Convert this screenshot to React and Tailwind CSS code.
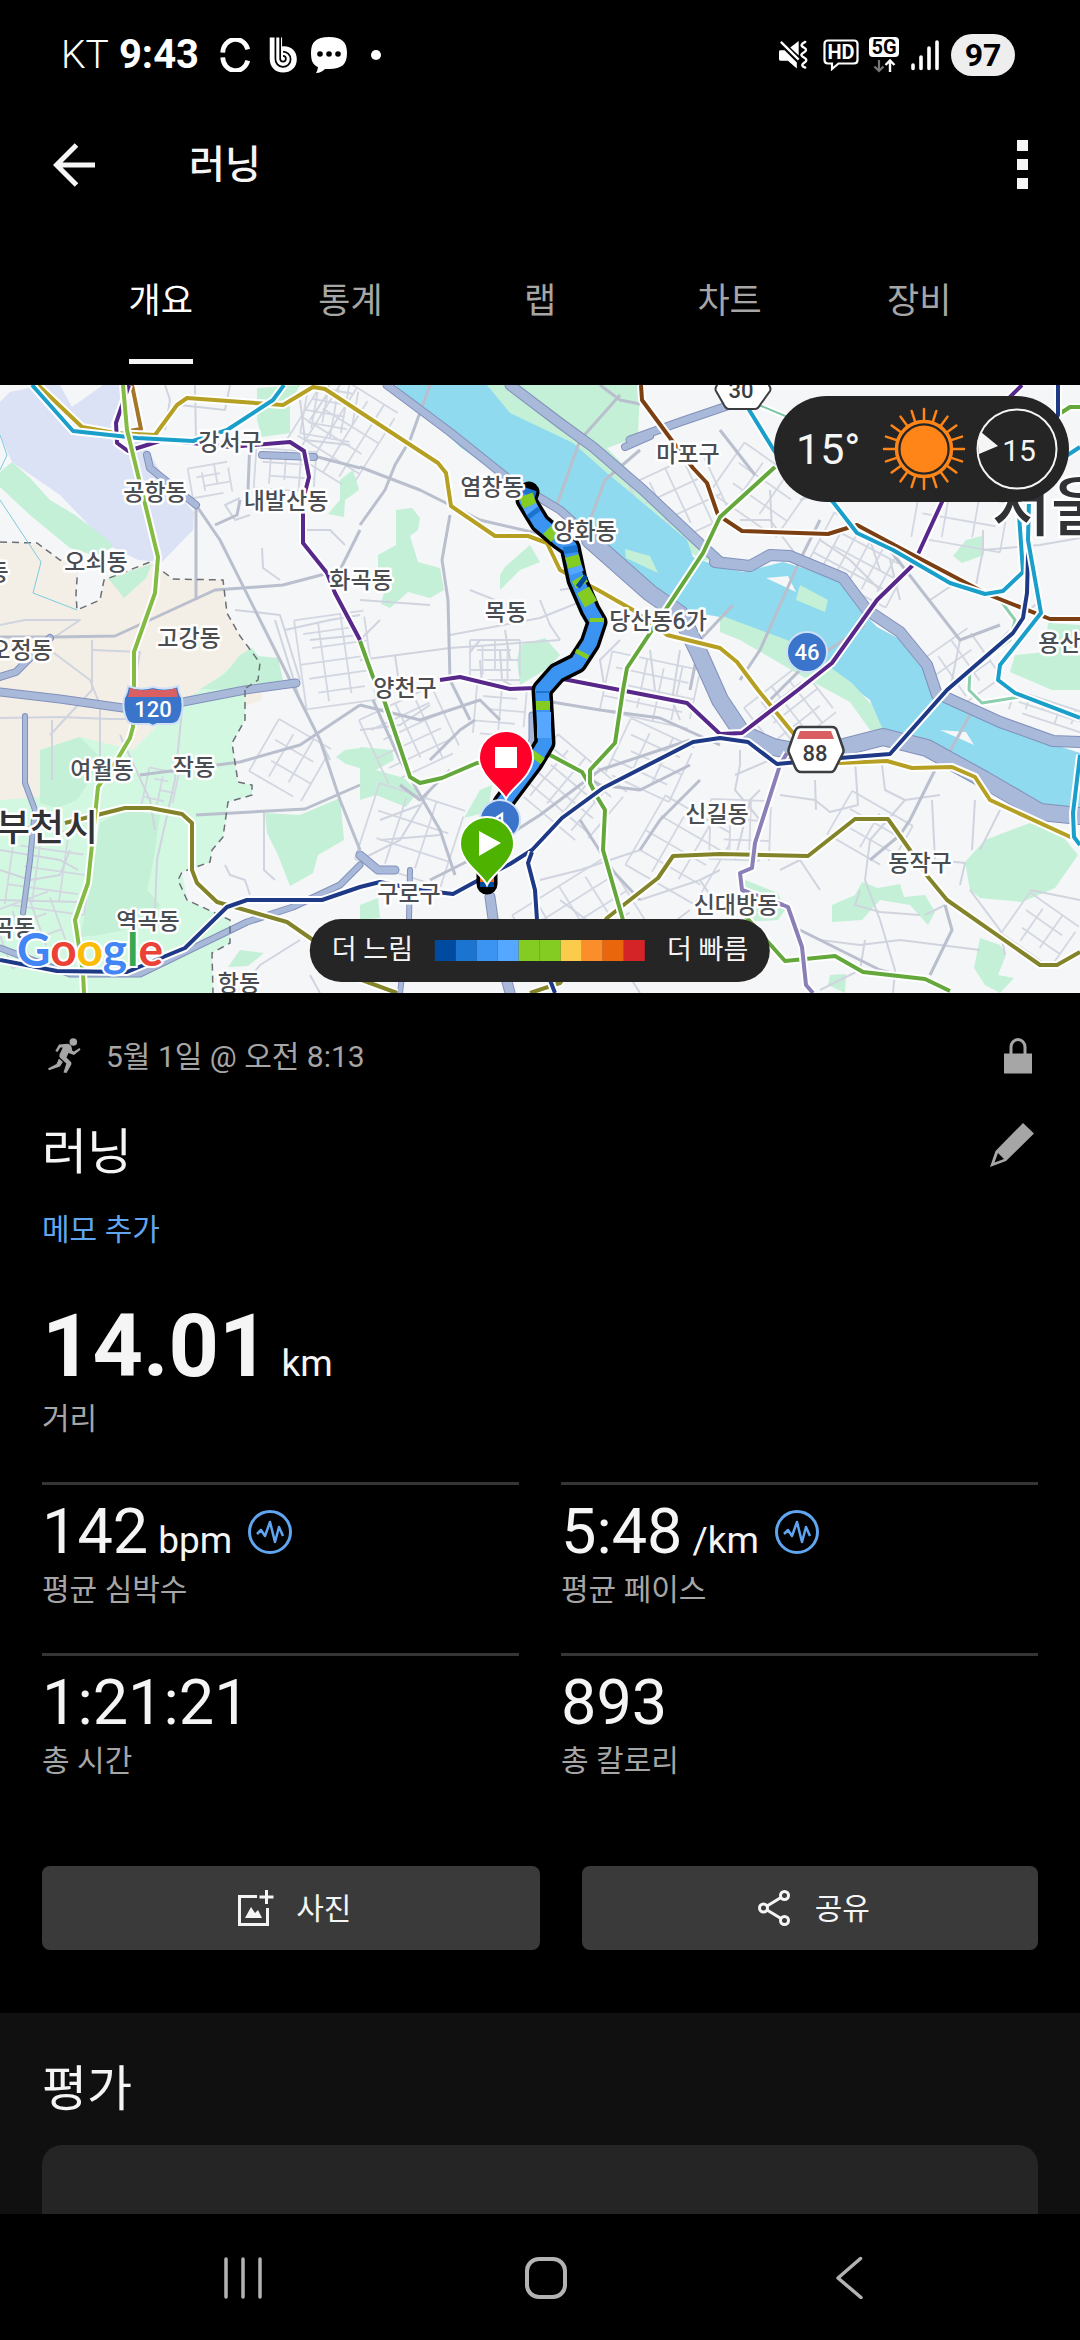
import React, { useState } from "react";

const TABS = ["개요", "통계", "랩", "차트", "장비"];

const PACE_COLORS = [
  "#004a9f",
  "#1b74cf",
  "#3c94f2",
  "#55a7ff",
  "#84cc22",
  "#84cc22",
  "#fbcc4c",
  "#f98e2b",
  "#ea660d",
  "#d42427",
];

const STATS = [
  { value: "142", unit: "bpm", label: "평균 심박수", badge: true },
  { value: "5:48", unit: "/km", label: "평균 페이스", badge: true },
  { value: "1:21:21", label: "총 시간" },
  { value: "893", label: "총 칼로리" },
];

// Map data, all in the coordinates of the map's viewBox
const AREAS = [
  { fill: "#dbe2f5", points: "0,402 10,392 45,385 60,385 72,407 103,385 128,385 118,405 110,425 118,445 142,440 165,480 194,512 193,530 162,562 138,560 108,545 60,495 12,462 0,435" },
  { fill: "#f4f6f8", points: "0,436 8,455 6,470 0,474" },
  { fill: "#c3f0d6", points: "12,462 30,478 50,500 75,515 108,540 113,547 96,556 70,548 30,515 0,487 0,472" },
  { fill: "#f4efe6", points: "0,542 37,543 60,560 78,566 76,593 77,610 100,600 104,580 150,562 173,579 223,580 227,613 240,636 260,663 262,700 180,730 110,760 40,805 0,810" },
  { fill: "#c3f0d6", points: "108,578 152,564 146,578 124,598" },
  { fill: "#d3f8e2", points: "245,690 245,720 232,743 238,782 252,785 252,795 228,802 223,837 212,850 210,862 182,872 187,900 230,920 230,943 212,953 213,993 0,993 0,800 40,797 40,750 80,737 133,750 180,703 215,680 245,655 250,645" },
  { fill: "#c3f0d6", points: "40,750 80,737 100,757 90,780 77,800 57,808 40,803" },
  { fill: "#c3f0d6", points: "100,823 125,810 160,815 153,863 147,890 160,905 148,925 100,935 80,937 90,890" },
  { fill: "#c3f0d6", points: "240,655 252,648 258,656 278,658 283,680 250,690 200,689 225,674" },
  { fill: "#c3f0d6", points: "257,388 300,385 290,403 290,433 262,437 257,420" },
  { fill: "#c3f0d6", points: "340,480 353,470 359,490 345,500 344,517 328,514 340,500" },
  { fill: "#c3f0d6", points: "396,510 412,508 420,518 418,530 410,536 418,562 440,568 444,590 430,598 408,592 390,608 381,604 384,592 378,580 378,555 396,545" },
  { fill: "#c3f0d6", points: "505,567 530,545 540,562 520,570 500,590 500,575" },
  { fill: "#c3f0d6", points: "520,645 545,638 560,655 548,668 520,685 517,660" },
  { fill: "#c3f0d6", points: "360,747 392,750 394,760 376,770 404,778 418,792 406,807 376,795 360,800" },
  { fill: "#c3f0d6", points: "464,818 480,790 492,785 488,812" },
  { fill: "#c3f0d6", points: "360,905 378,898 380,918 360,920" },
  { fill: "#c3f0d6", points: "265,813 300,815 340,798 344,840 318,855 313,873 290,886 278,855 267,833" },
  { fill: "#c3f0d6", points: "228,967 240,950 264,953 248,966" },
  { fill: "#c3f0d6", points: "336,757 345,750 360,748 360,768 346,764" },
  { fill: "#c3f0d6", points: "487,385 640,385 638,437 607,448 645,487 687,530 730,562 700,560 643,510 573,450 510,420" },
  { fill: "#c3f0d6", points: "966,540 982,536 984,555 962,563 953,556" },
  { fill: "#c3f0d6", points: "1048,623 1080,625 1080,690 1052,690 1010,672 1015,655 1045,652" },
  { fill: "#c3f0d6", points: "965,862 985,840 1030,823 1060,833 1078,855 1055,888 1022,902 980,898 970,890" },
  { fill: "#c3f0d6", points: "832,905 855,895 862,882 878,888 900,884 904,897 925,895 935,912 928,925 910,905 880,900 862,920 832,922" },
  { fill: "#c3f0d6", points: "745,880 778,893 785,910 778,920 742,922" },
  { fill: "#c3f0d6", points: "980,938 1000,945 1006,955 998,975 1014,978 1000,993 985,985 974,968" },
  { fill: "#c3f0d6", points: "830,975 846,974 845,993 828,985" },
];

const RIVER =
  "487,385 510,413 573,443 607,473 643,503 687,540 693,557 720,567 743,572 783,562 803,568 843,583 860,610 877,627 907,643 923,663 933,690 983,713 1040,740 1080,753 1080,813 1047,813 1007,790 970,767 927,747 907,733 883,732 870,700 850,685 813,660 787,643 720,617 680,610 643,580 607,550 573,520 520,490 460,447 420,407 395,385";

const RIVER_BANKS = [
  { fill: "#c3f0d6", points: "720,615 787,640 820,660 852,683 872,705 884,732 870,730 850,702 800,675 740,640 720,632" },
  { fill: "#c3f0d6", points: "800,585 828,600 825,612 796,600" },
  { fill: "#c3f0d6", points: "625,549 650,556 658,573 626,558" },
  { fill: "#c3f0d6", points: "573,520 607,547 660,592 650,590 600,552" },
  { fill: "#f4f6f8", points: "766,578 788,576 796,592" },
  { fill: "#f4f6f8", points: "940,730 966,732 974,745" },
];

const EXPRESSWAYS = [
  { w: 11, points: "510,385 560,423 593,447 643,490 693,537 720,562" },
  { w: 12, points: "715,562 750,566 770,555 790,556 843,578 867,610 900,632 927,665 937,695" },
  { w: 12, points: "945,697 1000,722 1053,741 1080,742" },
  { w: 9, points: "387,385 450,432 510,480 560,510 600,546" },
  { w: 18, points: "590,540 650,593 680,614 700,655 720,700 742,733 773,747 800,752 840,748 883,737 927,748 985,780 1040,812 1080,816" },
  { w: 9, points: "630,440 680,422 730,405" },
  { w: 8, points: "625,447 650,436" },
  { w: 8, points: "0,677 16,672 50,638" },
  { w: 9, points: "0,692 60,699 123,708 183,702 245,690 296,683" },
  { w: 6, points: "25,716 25,783 35,810 30,860 23,913" },
  { w: 7, points: "0,948 70,974 140,974 247,922 293,907 340,885 360,865" },
  { w: 8, points: "262,455 314,457" },
  { w: 8, points: "147,455 150,468 196,505" },
  { w: 7, points: "532,715 532,740 524,762" },
  { w: 11, points: "490,897 496,940 510,993" },
  { w: 6, points: "410,870 409,920 400,993" },
  { w: 9, points: "360,855 378,870 395,870" },
];

const MAIN_ROADS = [
  "0,637 55,637 115,636 150,620 215,590 283,585 340,570 360,530",
  "196,505 196,600",
  "196,505 220,540 260,620 305,710 320,740 340,800 360,850",
  "250,440 248,490",
  "310,455 360,468",
  "360,467 420,490 480,520 545,535",
  "360,525 385,490 395,465 410,440 430,385",
  "450,515 442,560 448,600 450,680 470,720",
  "196,815 305,809 360,785",
  "140,775 240,762 300,745 360,705",
  "215,525 237,515 240,500",
  "600,385 620,400 640,404",
  "620,395 580,440 555,510",
  "640,450 605,480 590,520",
  "820,520 800,560 760,650 740,680",
  "733,605 700,640 690,690",
  "970,715 945,760 935,770 910,820 900,835 870,860",
  "865,625 800,670 770,700",
  "800,930 880,970 940,985",
  "945,905 952,930 930,975",
  "890,550 960,640 1000,625",
  "720,430 755,475",
  "360,705 420,720 480,700 500,720",
  "540,700 600,710 660,718 720,745",
  "430,760 460,730 475,720",
  "373,700 400,760 440,830 455,875",
  "430,880 470,860 540,815 600,770 690,740",
  "580,820 612,870 640,900",
  "560,760 600,785 640,790 690,765",
  "640,850 660,820 700,780",
  "400,785 420,800 450,770",
];

const MINOR_ROADS = [
  "165,385 170,400 165,430",
  "195,385 196,440",
  "230,385 225,410 180,405",
  "0,625 25,620 80,620 50,640",
  "92,640 92,690 50,735",
  "92,650 140,652 135,680",
  "50,650 90,680 100,705 100,760",
  "262,548 263,568 280,580",
  "300,400 305,440 350,445",
  "310,420 330,390",
  "240,498 225,505 235,520 250,515",
  "303,530 330,530 345,545",
  "285,630 330,620 360,615",
  "310,640 360,635",
  "275,620 300,700 330,760",
  "235,610 280,615 300,680",
  "0,718 60,717 110,719 180,719",
  "183,700 175,780 157,860 155,910",
  "52,720 52,780",
  "0,850 60,860 78,870",
  "0,870 30,880 60,875 70,850",
  "0,900 80,902",
  "120,735 150,800 155,830",
  "225,865 230,875 245,880 250,895",
  "264,810 264,870 275,880",
  "300,940 260,965 240,990",
  "310,975 320,993",
  "360,600 430,605",
  "380,620 360,640",
  "450,635 540,618 585,600",
  "360,660 450,648 560,640",
  "395,655 400,690",
  "470,652 480,640 520,640",
  "480,660 482,685",
  "500,650 502,680 520,690",
  "505,630 510,660",
  "470,590 495,600",
  "540,600 550,625 560,640",
  "620,640 600,660 605,690",
  "650,650 655,690",
  "680,650 672,700 680,720",
  "560,590 590,585",
  "740,520 770,520 800,560",
  "770,490 772,530",
  "800,500 830,490 860,495 910,500",
  "820,540 850,560 880,590",
  "870,540 880,570",
  "890,560 900,600",
  "930,600 960,580",
  "983,550 1040,545 1080,538",
  "983,530 983,550 975,590",
  "960,640 950,690",
  "1000,640 1040,600",
  "740,750 740,765 735,790 760,820",
  "735,775 770,760",
  "855,760 858,805 830,812 815,800 780,795",
  "882,765 885,790 905,800 940,795",
  "815,780 816,810",
  "760,790 750,800 735,860",
  "905,800 870,840 865,880 880,920",
  "932,800 935,860 965,863 960,885",
  "975,800 972,850",
  "880,920 895,970 893,993",
  "865,940 860,970 820,990",
  "860,890 855,905 880,912 920,915",
  "925,915 945,905",
  "970,890 1000,930 1005,955",
  "1000,810 980,850",
  "1030,890 1080,900",
  "820,940 860,945 900,940 980,950",
  "780,870 800,860 820,890",
  "560,900 600,930 640,993",
  "540,880 580,870 640,850",
  "640,900 700,880 720,870",
  "650,940 690,910",
  "700,880 720,910",
  "380,840 440,835",
  "380,820 420,805",
  "360,860 400,840 430,790",
  "360,730 400,725 430,705",
];

// Rotated street grids that fill the residential districts
const DISTRICTS = [
  { x: 340, y: 430, w: 80, h: 90, a: 32, cols: 5, rows: 5 },
  { x: 330, y: 408, w: 60, h: 50, a: -80, cols: 5, rows: 5 },
  { x: 285, y: 470, w: 60, h: 40, a: 4, cols: 4, rows: 3 },
  { x: 210, y: 480, w: 40, h: 30, a: -10, cols: 3, rows: 3 },
  { x: 335, y: 660, w: 70, h: 90, a: -8, cols: 3, rows: 6 },
  { x: 410, y: 735, w: 80, h: 70, a: -25, cols: 4, rows: 5 },
  { x: 500, y: 710, w: 50, h: 50, a: 5, cols: 2, rows: 4 },
  { x: 495, y: 660, w: 50, h: 40, a: 0, cols: 4, rows: 4 },
  { x: 570, y: 790, w: 90, h: 70, a: 40, cols: 5, rows: 5 },
  { x: 650, y: 690, w: 90, h: 60, a: 12, cols: 5, rows: 4 },
  { x: 650, y: 760, w: 70, h: 60, a: 25, cols: 3, rows: 4 },
  { x: 580, y: 920, w: 110, h: 80, a: -32, cols: 4, rows: 4 },
  { x: 680, y: 850, w: 80, h: 80, a: -60, cols: 4, rows: 3 },
  { x: 410, y: 835, w: 90, h: 80, a: 18, cols: 3, rows: 3 },
  { x: 680, y: 500, w: 80, h: 70, a: -25, cols: 4, rows: 3 },
  { x: 760, y: 490, w: 80, h: 60, a: 35, cols: 3, rows: 3 },
  { x: 860, y: 560, w: 90, h: 60, a: 28, cols: 6, rows: 4 },
  { x: 960, y: 520, w: 90, h: 50, a: 10, cols: 3, rows: 2 },
  { x: 790, y: 710, w: 70, h: 60, a: -38, cols: 4, rows: 4 },
  { x: 740, y: 830, w: 60, h: 60, a: 2, cols: 3, rows: 3 },
  { x: 870, y: 830, w: 70, h: 50, a: 30, cols: 2, rows: 3 },
  { x: 1040, y: 930, w: 60, h: 50, a: 35, cols: 3, rows: 3 },
  { x: 50, y: 870, w: 80, h: 80, a: 8, cols: 3, rows: 4 },
  { x: 30, y: 930, w: 60, h: 60, a: -20, cols: 3, rows: 3 },
  { x: 290, y: 760, w: 60, h: 60, a: 30, cols: 3, rows: 3 },
  { x: 160, y: 790, w: 30, h: 40, a: 12, cols: 2, rows: 4 },
  { x: 1050, y: 712, w: 80, h: 20, a: 18, cols: 5, rows: 2 },
  { x: 960, y: 670, w: 60, h: 60, a: -35, cols: 3, rows: 3 },
];

const SUBWAYS = [
  { c: "#8ccfae", w: 3, points: "1000,600 1015,620 1010,640 970,670 969,690 982,703 1020,697" },
  { c: "#7ac6a5", w: 2, points: "735,395 790,418" },
  { c: "#a5762a", w: 4, points: "132,385 141,429 117,433" },
  { c: "#b5a024", w: 4, points: "38,385 82,427 115,433 155,435 177,405 187,398 283,405 313,387 325,389 360,412 438,463 446,473 451,506 495,536 528,536 547,543 560,570 573,577 598,590 633,610 667,635 720,648 737,662 758,690 793,733 840,763 887,761 912,768 952,767 975,777 990,800 1077,840" },
  { c: "#83842a", w: 4, points: "65,823 125,808 150,808 182,814 192,823 192,870 197,883 217,902 287,922 313,940 340,972 397,993" },
  { c: "#83842a", w: 4, points: "530,993 560,983 607,918 658,878 673,856 720,854 808,856 855,819 888,819 910,850 928,877 947,900 1040,965 1057,965 1080,952" },
  { c: "#57288a", w: 4, points: "129,385 116,423 117,443 128,451 163,440 230,447 290,442 304,451 309,477 303,500 303,543 327,573 335,593 360,640" },
  { c: "#64a83c", w: 4, points: "360,641 373,677 385,703 410,777 420,783 442,778 477,763 550,755 582,772 605,810 603,850 623,920" },
  { c: "#57288a", w: 4, points: "440,680 460,677 510,689 535,688 563,679 620,690 687,703 720,734 742,733 798,690 832,663 877,600 913,565 942,502 970,440 1010,397 1022,385" },
  { c: "#1a9fcb", w: 4, points: "32,385 73,431 137,438 193,441 227,430 273,400 284,385" },
  { c: "#83bb43", w: 4, points: "123,385 127,430 158,557 155,593 134,652 134,690 133,727 130,738 117,760 98,787 88,883 75,920 83,973 84,993" },
  { c: "#7c3f12", w: 4, points: "641,385 642,400 673,442 693,468 707,483 718,515 742,531 828,534 857,525 913,555 987,594 1050,619 1080,619" },
  { c: "#64a83c", w: 4, points: "775,467 720,517 703,553 627,668 623,690 615,743 590,770 590,783 597,797" },
  { c: "#64a83c", w: 4, points: "1050,420 1070,407 1080,407" },
  { c: "#64a83c", w: 4, points: "740,910 768,942 785,961 835,956 863,972 925,979 950,991" },
  { c: "#8b7fb8", w: 4, points: "787,753 780,765 755,843 752,868 740,873 742,890 783,905 788,907 802,947 806,985 813,993" },
  { c: "#1a9fcb", w: 4, points: "730,385 748,408 775,452 833,502 857,533 893,550 950,583 985,594 1003,591 1023,572 1018,500" },
  { c: "#1e3a87", w: 4, points: "1058,385 1058,415 1030,480 1027,593 1023,618 1013,633 947,690 890,754 840,758 777,764 748,742 720,738 693,742 603,788 562,818 532,850 510,864 475,882 453,894 420,890 380,882 360,887 322,900 247,900 227,907 185,948 127,972 57,971 0,960" },
  { c: "#1e3a87", w: 4, points: "532,852 528,863 535,890 537,920 550,980 555,993" },
  { c: "#1a9fcb", w: 4, points: "1029,500 1028,540 1041,613 1000,665 998,680 1015,693 1080,718" },
  { c: "#1a9fcb", w: 4, points: "1060,460 1080,447" },
  { c: "#1a9fcb", w: 4, points: "1080,755 1073,813 1074,837 1080,845" },
];

const BORDERS = [
  "0,542 37,543 60,560 78,566 76,593 77,610 100,600 104,580 150,562 173,579 223,580 227,613 240,636 260,663 258,680 246,688",
  "245,690 245,720 232,743 238,782 252,785 252,795 228,802 223,837 212,850 210,862 182,872 178,880 187,900 230,920 230,943 212,953 213,993",
];

const ROUTE = "529,492 526,500 540,523 560,540 570,547 577,580 590,610 597,622 590,643 577,663 557,673 542,690 545,743 533,763 503,803 487,850 487,884";

const ROUTE_PARTS = [
  { c: "#1b74cf", points: "530,489 528,495" },
  { c: "#84cc22", points: "526,495 530,506" },
  { c: "#55a7ff", points: "530,506 533,512" },
  { c: "#1b74cf", points: "532,511 535,515" },
  { c: "#84cc22", points: "548,529 556,537" },
  { c: "#1b74cf", points: "570,546 571,553" },
  { c: "#84cc22", points: "572,556 575,567" },
  { c: "#55a7ff", points: "575,567 577,573" },
  { c: "#84cc22", points: "578,578 582,585" },
  { c: "#004a9f", points: "580,580 584,583" },
  { c: "#84cc22", points: "583,590 591,604" },
  { c: "#84cc22", points: "597,618 597,622" },
  { c: "#84cc22", points: "583,652 581,656" },
  { c: "#1b74cf", points: "543,691 543,693" },
  { c: "#84cc22", points: "543,701 543,710" },
  { c: "#55a7ff", points: "544,712 544,738" },
  { c: "#84cc22", points: "539,754 535,760" },
  { c: "#ea660d", points: "487,878 487,882" },
  { c: "#004a9f", points: "487,882 487,887" },
];

const PLACES = [
  { t: "강서구", x: 230, y: 442 },
  { t: "공항동", x: 155, y: 492 },
  { t: "내발산동", x: 286, y: 501 },
  { t: "오쇠동", x: 96, y: 562 },
  { t: "동", x: -2, y: 572 },
  { t: "오정동", x: 21, y: 650 },
  { t: "고강동", x: 189, y: 638 },
  { t: "화곡동", x: 361, y: 580 },
  { t: "염창동", x: 492, y: 487 },
  { t: "양화동", x: 585, y: 531 },
  { t: "목동", x: 506, y: 612 },
  { t: "양천구", x: 405, y: 688 },
  { t: "마포구", x: 688, y: 454 },
  { t: "당산동6가", x: 658, y: 621 },
  { t: "여월동", x: 102, y: 770 },
  { t: "작동", x: 194, y: 767 },
  { t: "곡동", x: 14, y: 928 },
  { t: "역곡동", x: 148, y: 921 },
  { t: "항동", x: 239, y: 983 },
  { t: "구로구", x: 409, y: 894 },
  { t: "신길동", x: 717, y: 814 },
  { t: "신대방동", x: 736, y: 905 },
  { t: "동작구", x: 920, y: 863 },
  { t: "용산구", x: 1070, y: 643 },
];

const GOOGLE = [
  ["G", "text-[#4285f4]"],
  ["o", "text-[#ea4335]"],
  ["o", "text-[#fbbc05]"],
  ["g", "text-[#4285f4]"],
  ["l", "text-[#34a853]"],
  ["e", "text-[#ea4335]"],
];

const StatusBar = () => (
  <div className="flex h-[110px] items-center justify-between pl-[61px] pr-[65px] text-white">
    <div className="flex items-center">
      <span className="text-[39px] font-light leading-none">KT</span>
      <span className="ml-2.5 text-[40px] font-bold leading-none">9:43</span>
      <svg className="ml-5 h-[34px] w-[33px]" viewBox="0 0 32 36" fill="none" stroke="#fff" strokeWidth="5">
        <path d="M2.500 15.500A13.500 14.500 0 0 1 29 12" />
        <path d="M2.500 20.500A13.500 14.500 0 0 0 29 24" />
      </svg>
      <svg className="ml-4 h-[38px] w-[31px]" viewBox="0 0 32 40" fill="none">
        <path d="M1.500 1.500h13v9.500c9-1 15.500 4.500 15.500 13.500S23.500 38.500 15.500 38.500 1.500 33 1.500 24z" fill="#fff" />
        <path d="M7.500 1v23a8 8 0 1 0 8-7.500" stroke="#000" strokeWidth="1.800" />
        <path d="M12.500 1v23a3 3 0 1 0 3-3" stroke="#000" strokeWidth="1.800" />
      </svg>
      <svg className="ml-3 h-[38px] w-9" viewBox="0 0 36 38">
        <path d="M18 1C5 1 0 6 0 17c0 8 2 12 7 14-.5 3-1 4-2 6 4 0 7-2 9-4h4c13 0 18-5 18-16S31 1 18 1z" fill="#fff" />
        <circle cx="9" cy="18" r="2.800" />
        <circle cx="18" cy="18" r="2.800" />
        <circle cx="27" cy="18" r="2.800" />
      </svg>
      <span className="ml-6 h-2.5 w-2.5 rounded-full bg-white" />
    </div>
    <div className="flex items-center">
      <svg className="h-[30px] w-[30px]" viewBox="0 0 32 32">
        <path d="M0 12.500q0-1.500 1.500-1.500h4.500L19 24v6.500L9.500 22H1.500Q0 22 0 20.500z" fill="#fff" />
        <path d="M12 8l9-7v15.500z" fill="#fff" />
        <path d="M2 2l19 19" stroke="#fff" strokeWidth="2.500" />
        <path d="M28 2c-5 2.500-5 4 -1.500 6s3 3.500-.5 5.500-2.500 3.500 1 5.500 2.500 3.500-.5 5.500-2 3.500 1.500 5" fill="none" stroke="#fff" strokeWidth="2.500" strokeLinecap="round" />
      </svg>
      <svg className="ml-3.5 h-8 w-9" viewBox="0 0 36 32">
        <path d="M5 1.500h26q3.500 0 3.500 3.500v16q0 3.500-3.500 3.500H15.500L9 30v-5.500H5Q1.500 24.500 1.500 21V5Q1.500 1.500 5 1.500z" fill="none" stroke="#fff" strokeWidth="2.200" />
        <text x="18" y="20" textAnchor="middle" fontSize="20" fontWeight="700" fill="#fff">HD</text>
      </svg>
      <svg className="ml-2.5 h-9 w-8" viewBox="0 0 32 36">
        <rect x="0" y="0" width="30" height="20" rx="4" fill="#fff" />
        <text x="15" y="17" textAnchor="middle" fontSize="20" fontWeight="700">5G</text>
        <path d="M10 23v11M5.500 29.500L10 34l4.500-4.500" fill="none" stroke="#777" strokeWidth="2.200" />
        <path d="M21 35V24M16.500 28L21 23.500l4.500 4.500" fill="none" stroke="#fff" strokeWidth="2.400" />
      </svg>
      <svg className="ml-2.5 h-8 w-7" viewBox="0 0 28 32" stroke="#fff" strokeWidth="3.600" strokeLinecap="round">
        <path d="M2 26v3.500M10 18v11.500M18 9v20.500M26 3v26.500" />
      </svg>
      <span className="ml-3 flex h-[42px] w-16 items-center justify-center rounded-full bg-[#eee] text-[32px] font-bold leading-none text-black">97</span>
    </div>
  </div>
);

const AppBar = () => (
  <div className="flex h-[109px] items-center pl-[53px] pr-[52px]">
    <button type="button" aria-label="뒤로">
      <svg className="h-11 w-11" viewBox="0 0 44 44" fill="none" stroke="#f5f5f5" strokeWidth="5">
        <path d="M42 22H4M23.500 2L3.500 22l20 20" />
      </svg>
    </button>
    <h1 className="ml-[92px] flex-1 text-[39px] font-medium leading-[48px] text-[#f5f5f5]">러닝</h1>
    <button type="button" aria-label="더보기" className="flex flex-col gap-2">
      <span className="h-[11px] w-[11px] bg-[#f5f5f5]" />
      <span className="h-[11px] w-[11px] bg-[#f5f5f5]" />
      <span className="h-[11px] w-[11px] bg-[#f5f5f5]" />
    </button>
  </div>
);

const Tabs = ({ active, onChange }) => (
  <nav className="grid h-[166px] grid-cols-5 px-[66px]">
    {TABS.map((tab) => (
      <button
        key={tab}
        type="button"
        onClick={() => onChange(tab)}
        className={`flex flex-col items-center justify-end pb-[21px] text-[35px] leading-[48px] ${
          tab === active ? "text-white" : "text-[#a6a6a6]"
        }`}
      >
        <span>{tab}</span>
        <span className={`mt-[33px] h-[5px] w-16 ${tab === active ? "bg-[#f5f5f5]" : "bg-transparent"}`} />
      </button>
    ))}
  </nav>
);

const District = ({ x, y, w, h, a, cols, rows }) => {
  let d = "";
  for (let i = 0; i <= cols; i++) {
    const px = -w / 2 + (w / cols) * i;
    d += `M${px} ${-h / 2 + (i % 2) * 6}V${h / 2 - (i % 3) * 5}`;
  }
  for (let j = 0; j <= rows; j++) {
    const py = -h / 2 + (h / rows) * j;
    d += `M${-w / 2 + (j % 3) * 7} ${py}H${w / 2 - (j % 2) * 9}`;
  }
  return <path d={d} transform={`translate(${x} ${y}) rotate(${a})`} />;
};

const Pin = ({ x, y, color, children }) => (
  <g transform={`translate(${x} ${y})`}>
    <path d="M0 41C-4 31-27 18-27 0a27 27 0 0 1 54 0C27 18 4 31 0 41z" fill={color} stroke="#fff" strokeWidth="2" />
    {children}
  </g>
);

const MapDrawing = () => (
  <svg className="block h-full w-full" viewBox="0 385 1080 608" preserveAspectRatio="xMidYMid slice" fill="none">
    <rect x="0" y="385" width="1080" height="608" fill="#f5f6f8" />
    {AREAS.map((a, i) => (
      <polygon key={i} {...a} />
    ))}
    <g stroke="#d3d7e1" strokeWidth="1.800">
      {DISTRICTS.map((d, i) => (
        <District key={i} {...d} />
      ))}
    </g>
    <polygon points={RIVER} fill="#8fdaee" />
    {RIVER_BANKS.map((a, i) => (
      <polygon key={i} {...a} />
    ))}
    <g stroke="#d0d4df" strokeWidth="2" strokeLinejoin="round">
      {MINOR_ROADS.map((p, i) => (
        <polyline key={i} points={p} />
      ))}
    </g>
    <g stroke="#b9bfcd" strokeWidth="3" strokeLinejoin="round">
      {MAIN_ROADS.map((p, i) => (
        <polyline key={i} points={p} />
      ))}
    </g>
    <g strokeLinejoin="round" strokeLinecap="round">
      {EXPRESSWAYS.map((r, i) => (
        <polyline key={i} points={r.points} stroke="#8291bb" strokeWidth={r.w} />
      ))}
      {EXPRESSWAYS.map((r, i) => (
        <polyline key={i} points={r.points} stroke="#a9b9d9" strokeWidth={r.w - 2} />
      ))}
    </g>
    <g stroke="#6b6f76" strokeWidth="1.500" strokeDasharray="7 5">
      {BORDERS.map((p, i) => (
        <polyline key={i} points={p} />
      ))}
    </g>
    <polyline points="0,435 7,455 0,470" stroke="#7ccbdc" />
    <polyline points="0,500 41,562 33,593 77,610" stroke="#7ccbdc" />
    <g strokeLinejoin="round">
      {SUBWAYS.map((s, i) => (
        <g key={i}>
          <polyline points={s.points} stroke="#fff" strokeWidth={s.w + 4} />
          <polyline points={s.points} stroke={s.c} strokeWidth={s.w} />
        </g>
      ))}
    </g>

    {/* Recorded route, coloured by pace */}
    <polyline points={ROUTE} stroke="#000" strokeWidth="21" strokeLinejoin="round" strokeLinecap="round" />
    <polyline points={ROUTE} stroke="#3c94f2" strokeWidth="14" strokeLinejoin="round" />
    {ROUTE_PARTS.map((s, i) => (
      <polyline key={i} points={s.points} stroke={s.c} strokeWidth="14" />
    ))}

    <g
      fill="#4a4d52"
      stroke="#fff"
      strokeWidth="5"
      strokeLinejoin="round"
      paintOrder="stroke"
      textAnchor="middle"
      fontSize="23"
      fontWeight="500"
    >
      {PLACES.map((p) => (
        <text key={p.t + p.x} x={p.x} y={p.y + 8}>{p.t}</text>
      ))}
      <text x="47" y="841" fontSize="37" fill="#303236">부천시</text>
      <text x="1051" y="530" fontSize="64" fill="#303236">서울</text>
    </g>

    {/* Road shields */}
    <g textAnchor="middle" fontWeight="500" fontSize="22">
      <circle cx="807" cy="652" r="20" fill="#3a74cb" stroke="#cfe0f7" strokeWidth="2" />
      <text x="807" y="660" fill="#fff">46</text>
      <path d="M729 362h25q3 0 4 3l12 22q1 2 0 4l-10 14q-2 4-5 4h-26q-3 0-5-4l-8-14q-1-2 0-4l11-22z" fill="#fff" stroke="#3b3d40" strokeWidth="2" />
      <text x="741" y="398" fill="#3b3d40">30</text>
      <path d="M800 727h32q4 0 5 4l6 17q1 3 0 5l-7 14q-2 5-5 5h-30q-4 0-6-5l-6-14q-1-2 0-5l6-17q2-4 5-4z" fill="#fff" stroke="#3b3d40" strokeWidth="2.500" />
      <path d="M800 731h31l3 8h-37z" fill="#d95f62" />
      <text x="815" y="761" fill="#3b3d40">88</text>
      <path d="M128 686q12 5 25 1 13 4 25-1 1 8 4 12 2 14-3 22-2 4-8 4h-14l-4 2-4-2h-14q-6 0-8-4-5-10-3-22 3-4 4-12z" fill="#3a74cb" stroke="#cfe0f7" strokeWidth="2" />
      <path d="M130 688q12 4 23 1 12 3 23-1l2 9h-50z" fill="#d95f62" />
      <text x="153" y="717" fill="#fff">120</text>
    </g>

    <circle cx="500" cy="820" r="20" fill="#3a74cb" stroke="#cfe0f7" strokeWidth="2" />
    <path d="M496 818l6-4v8" stroke="#fff" strokeWidth="2.500" />
    <Pin x={506} y={758} color="#ff0028">
      <rect x="-11" y="-11" width="22" height="21" fill="#fff" />
    </Pin>
    <Pin x={487} y={844} color="#4db300">
      <path d="M-8-13L14-1-8 12z" fill="#fff" />
    </Pin>
  </svg>
);

const WeatherBadge = () => (
  <div className="absolute right-[11px] top-[11px] flex h-[106px] items-center rounded-full bg-[#252525] pl-[22px] pr-[11px] text-[#f5f5f5]">
    <span className="w-[86px] text-[43px] leading-none">15°</span>
    <svg className="h-[84px] w-[84px]" viewBox="-42 -42 84 84">
      {Array.from({ length: 20 }, (_, i) => (
        <path key={i} d="M0-28V-40" stroke="#ff8519" strokeWidth="2.500" strokeLinecap="round" transform={`rotate(${i * 18})`} />
      ))}
      <circle r="27.500" fill="none" stroke="#ff8519" strokeWidth="3.500" />
      <circle r="23.500" fill="#ff8519" />
    </svg>
    <svg className="ml-2.5 h-[82px] w-[82px]" viewBox="-41 -41 82 82">
      <circle r="39.500" fill="none" stroke="#f5f5f5" strokeWidth="2" />
      <path d="M-36-17L-19-3-38 5Q-40-8-36-17z" fill="#f5f5f5" />
      <text x="2" y="12" textAnchor="middle" fontSize="30" fill="#f5f5f5">15</text>
    </svg>
  </div>
);

const PaceLegend = () => (
  <div className="absolute bottom-[11px] left-1/2 flex h-[63px] -translate-x-1/2 items-center gap-[22px] whitespace-nowrap rounded-full bg-[#252525] px-[22px] text-[27px] leading-none text-[#f5f5f5]">
    <span>더 느림</span>
    <div className="flex">
      {PACE_COLORS.map((color, i) => (
        <span key={i} className="h-[21px] w-[21px]" style={{ backgroundColor: color }} />
      ))}
    </div>
    <span>더 빠름</span>
  </div>
);

const PulseBadge = () => (
  <svg className="h-11 w-11" viewBox="0 0 44 44" fill="none" stroke="#60a5f0">
    <circle cx="22" cy="22" r="20.500" strokeWidth="3" />
    <path d="M9 24l4-4 4 6 5-14 5 20 4-15 4 9" strokeWidth="2.500" strokeLinejoin="round" />
  </svg>
);

const Stat = ({ value, unit, label, badge }) => (
  <div className="border-t-[3px] border-[#353535] pb-[41px] pt-[11px]">
    <div className="flex h-[72px] items-center">
      <p className="flex items-baseline gap-2.5 text-[#f5f5f5]">
        <span className="text-[63px] leading-[72px]">{value}</span>
        {unit && <span className="text-[37px] leading-none">{unit}</span>}
      </p>
      {badge && (
        <button type="button" aria-label={`${label} 정보`} className="ml-4">
          <PulseBadge />
        </button>
      )}
    </div>
    <p className="text-[30px] leading-[44px] text-[#a6a6a6]">{label}</p>
  </div>
);

const Summary = () => (
  <section className="px-[42px] pb-[63px] pt-[38px]">
    <div className="flex h-[50px] items-center text-[#a6a6a6]">
      <svg className="ml-1.5 h-9 w-9" viewBox="0 0 36 36" fill="#a6a6a6">
        <circle cx="25.300" cy="4" r="3.800" />
        <path d="M11 6.500l9-.8q3 1 3.500 3l.8 4 1.700.8 5.500-3.500 1 1.800-6.500 5.200-5.500-2-2 4.500 4.500 4.500q.8 1 .3 2.500L18.500 35l-3-.5 2.800-9-6-5.500q-1.500-1.500-.8-3.500l3.300-7h-2.500L9.500 14l-2.200-1z" />
        <path d="M11 20.500l3.800 3.500-2.800 4.500L1 32.200 0 30.500l8.500-4.500z" />
      </svg>
      <p className="ml-[22px] flex-1 text-[30px]">5월 1일 @ 오전 8:13</p>
      <svg className="mr-1 h-9 w-8" viewBox="0 0 32 36">
        <path d="M9 17V9a7 7.500 0 0 1 14 0v8" fill="none" stroke="#a6a6a6" strokeWidth="3" />
        <rect x="2" y="15.500" width="28" height="20" fill="#a6a6a6" />
      </svg>
    </div>

    <div className="mt-9 flex h-[72px] items-start justify-between">
      <h2 className="text-[49px] leading-[72px] text-[#f5f5f5]">러닝</h2>
      <button type="button" aria-label="이름 편집" className="mr-1 mt-1.5">
        <svg className="h-11 w-11" viewBox="0 0 44 44" fill="#a6a6a6">
          <path fillRule="evenodd" d="M33 0l11 10.500L16 38 0 44 5.500 28zM8 30l-3.500 9.500 9.500-3.500z" />
        </svg>
      </button>
    </div>

    <button type="button" className="mt-[19px] block text-[30px] leading-[44px] text-[#60a5f0]">메모 추가</button>

    <p className="mt-[46px] flex items-baseline gap-3 text-[#f5f5f5]">
      <span className="text-[88px] font-bold leading-[96px]">14.01</span>
      <span className="text-[37px] leading-none">km</span>
    </p>
    <p className="mt-[3px] text-[30px] leading-[44px] text-[#a6a6a6]">거리</p>

    <div className="mt-[41px] grid grid-cols-2 gap-x-[42px]">
      {STATS.map((stat) => (
        <Stat key={stat.label} {...stat} />
      ))}
    </div>

    <div className="mt-[42px] grid grid-cols-[12fr_11fr] gap-x-[42px] text-[30px] text-[#f5f5f5]">
      <button type="button" className="flex h-[84px] items-center justify-center gap-[22px] rounded-lg bg-[#3a3a3a] pl-2">
        <svg className="h-9 w-9" viewBox="0 0 36 36" fill="none" stroke="#f5f5f5" strokeWidth="3">
          <path d="M19 6.500H1.500v28h28V18" />
          <path d="M28.500 0v14M21.500 7h14" />
          <path d="M7 28l6-11 4 6 3-3 4 8z" fill="#f5f5f5" stroke="none" />
        </svg>
        사진
      </button>
      <button type="button" className="flex h-[84px] items-center justify-center gap-[25px] rounded-lg bg-[#3a3a3a] pl-2">
        <svg className="h-9 w-8" viewBox="0 0 32 36" fill="none" stroke="#f5f5f5" strokeWidth="3">
          <circle cx="5.500" cy="18" r="4" />
          <circle cx="26.500" cy="5.500" r="4" />
          <circle cx="26.500" cy="30.500" r="4" />
          <path d="M9 16l14-8.500M9 20l14 8.500" />
        </svg>
        공유
      </button>
    </div>
  </section>
);

const SystemNav = () => (
  <nav className="grid h-[126px] grid-cols-3 items-center justify-items-center bg-black pl-[91px] pr-20">
    <button type="button" aria-label="최근 앱">
      <svg className="h-11 w-10" viewBox="0 0 40 44" stroke="#b3b3b3" strokeWidth="3.500" strokeLinecap="round">
        <path d="M3 4v38M20 4v38M37 4v38" />
      </svg>
    </button>
    <button type="button" aria-label="홈">
      <svg className="h-11 w-11" viewBox="0 0 44 44" fill="none">
        <rect x="3" y="4" width="38" height="38" rx="12" stroke="#b3b3b3" strokeWidth="4" />
      </svg>
    </button>
    <button type="button" aria-label="뒤로">
      <svg className="h-11 w-7" viewBox="0 0 28 44" fill="none" stroke="#b3b3b3" strokeWidth="3.500" strokeLinecap="round" strokeLinejoin="round">
        <path d="M25.500 3.500L3 23l23 19.500" />
      </svg>
    </button>
  </nav>
);

const App = () => {
  const [tab, setTab] = useState("개요");

  return (
    <div className="flex min-h-screen flex-col bg-black font-['Roboto','Noto_Sans_CJK_KR',sans-serif]">
      <header>
        <StatusBar />
        <AppBar />
        <Tabs active={tab} onChange={setTab} />
      </header>

      <div className="relative aspect-[1080/608] overflow-hidden">
        <MapDrawing />
        <p className="absolute bottom-4 left-[17px] font-['Lato',sans-serif] text-[46px] font-bold leading-[56px] [-webkit-text-stroke:4px_white] [paint-order:stroke_fill]">
          {GOOGLE.map(([letter, color], i) => (
            <span key={i} className={color}>{letter}</span>
          ))}
        </p>
        <WeatherBadge />
        <PaceLegend />
      </div>

      <Summary />

      <section className="flex flex-1 flex-col bg-[#101010] px-[42px] pt-[47px]">
        <h2 className="text-[49px] leading-[60px] text-[#f5f5f5]">평가</h2>
        <div className="mt-[25px] flex-1 rounded-t-[20px] bg-[#252525]" />
      </section>

      <SystemNav />
    </div>
  );
};

export default App;
